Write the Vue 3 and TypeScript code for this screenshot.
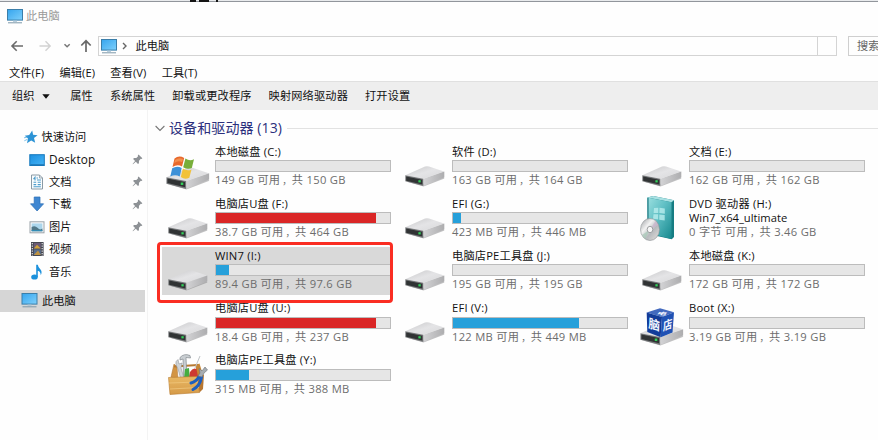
<script setup lang="ts">
interface Drive {
  name: string
  label?: string
  free: string
  total: string
  used?: number
  full?: boolean
  icon: string
  selected?: boolean
}

interface Place {
  name: string
  icon: string
  pinned?: boolean
}

const menus: string[] = ['文件(F)', '编辑(E)', '查看(V)', '工具(T)']
const commands: string[] = ['属性', '系统属性', '卸载或更改程序', '映射网络驱动器', '打开设置']

const places: Place[] = [
  { name: 'Desktop', icon: 'desktop', pinned: true },
  { name: '文档', icon: 'document', pinned: true },
  { name: '下载', icon: 'download', pinned: true },
  { name: '图片', icon: 'picture', pinned: true },
  { name: '视频', icon: 'video' },
  { name: '音乐', icon: 'music' },
]

const drives: Drive[] = [
  { name: '本地磁盘 (C:)', free: '149 GB', total: '150 GB', used: 0, icon: 'system' },
  { name: '软件 (D:)', free: '163 GB', total: '164 GB', used: 0, icon: 'drive' },
  { name: '文档 (E:)', free: '162 GB', total: '162 GB', used: 0, icon: 'drive' },
  { name: '电脑店U盘 (F:)', free: '38.7 GB', total: '464 GB', used: 92, full: true, icon: 'drive' },
  { name: 'EFI (G:)', free: '423 MB', total: '446 MB', used: 5, icon: 'drive' },
  { name: 'DVD 驱动器 (H:)', label: 'Win7_x64_ultimate', free: '0 字节', total: '3.46 GB', icon: 'dvd' },
  { name: 'WIN7 (I:)', free: '89.4 GB', total: '97.6 GB', used: 8, icon: 'drive', selected: true },
  { name: '电脑店PE工具盘 (J:)', free: '195 GB', total: '195 GB', used: 0, icon: 'drive' },
  { name: '本地磁盘 (K:)', free: '172 GB', total: '172 GB', used: 0, icon: 'drive' },
  { name: '电脑店U盘 (U:)', free: '18.4 GB', total: '237 GB', used: 92, full: true, icon: 'drive' },
  { name: 'EFI (V:)', free: '122 MB', total: '449 MB', used: 72.5, icon: 'drive' },
  { name: 'Boot (X:)', free: '3.19 GB', total: '3.19 GB', used: 0, icon: 'boot' },
  { name: '电脑店PE工具盘 (Y:)', free: '315 MB', total: '388 MB', used: 19, icon: 'toolbox' },
]
</script>

<template>
  <div class="window">
    <svg class="defs" width="0" height="0">
      <defs>
        <linearGradient id="gScreen" x1="0" y1="0" x2="1" y2="1">
          <stop offset="0" stop-color="#35a5ee" />
          <stop offset="1" stop-color="#7fd0fb" />
        </linearGradient>
        <linearGradient id="gDesk" x1="0" y1="0" x2="1" y2="1">
          <stop offset="0" stop-color="#1c8fe0" />
          <stop offset="1" stop-color="#45b4f5" />
        </linearGradient>
        <linearGradient id="gTop" x1="0" y1="0" x2="1" y2="1">
          <stop offset="0" stop-color="#c6c6c8" />
          <stop offset="0.5" stop-color="#e4e4e6" />
          <stop offset="1" stop-color="#d8d8da" />
        </linearGradient>
        <linearGradient id="gSide" x1="0" y1="0" x2="1" y2="0">
          <stop offset="0" stop-color="#d3d3d5" />
          <stop offset="1" stop-color="#adadaf" />
        </linearGradient>
        <linearGradient id="gCase" x1="0" y1="0" x2="1" y2="1">
          <stop offset="0" stop-color="#9ce0e0" />
          <stop offset="0.45" stop-color="#5fbfc4" />
          <stop offset="1" stop-color="#16888e" />
        </linearGradient>
        <linearGradient id="gDisc" x1="0" y1="0" x2="1" y2="1">
          <stop offset="0" stop-color="#9a9da0" />
          <stop offset="0.35" stop-color="#f2f2f2" />
          <stop offset="0.6" stop-color="#b7babd" />
          <stop offset="1" stop-color="#e7e2df" />
        </linearGradient>
        <linearGradient id="gWood" x1="0" y1="0" x2="0" y2="1">
          <stop offset="0" stop-color="#e9b864" />
          <stop offset="1" stop-color="#d59a48" />
        </linearGradient>
        <symbol id="pc" viewBox="0 0 16 15">
          <rect x="0.5" y="0.5" width="15" height="10.6" fill="url(#gScreen)" stroke="#3b7ea9" />
          <path d="M6 11.5h4v1.3H6z" fill="#a9c4d6" />
          <path d="M1 13.8h14" stroke="#7d98a9" stroke-width="1" />
        </symbol>
        <symbol id="drive" viewBox="0 0 40 21">
          <path d="M1 15.5 18.5 20.6 39.5 12.5 38 11 18 18z" fill="#77777a" opacity=".45" />
          <path d="M.3 9.3 20 .6Q22 0 24 .6L39 5.6 18.3 12.8z" fill="url(#gTop)" />
          <path d="M18.3 12.8 39.3 5.6V11.4L18.3 20z" fill="url(#gSide)" />
          <path d="M.3 9.3 18.3 12.8V20L.3 15.3z" fill="#77797b" />
          <path d="M1.2 10.5 17.3 13.8V18.6L1.2 14.7z" fill="#303334" />
          <rect x="13.4" y="14.2" width="2.3" height="2.2" fill="#32d35a" />
        </symbol>
      </defs>
    </svg>

    <div class="edge"><i class="speck s1"></i><i class="speck s2"></i><i class="speck s3"></i></div>

    <header class="titlebar">
      <svg class="pc" width="16" height="15"><use href="#pc" /></svg>
      <span>此电脑</span>
    </header>

    <div class="nav">
      <svg class="arrows" width="85" height="20" viewBox="0 0 85 20" fill="none">
        <path d="M12 10H23M16.7 5.3 12 10l4.7 4.7" stroke="#6b6b6b" stroke-width="1.6" />
        <path d="M39.5 10H50M45.5 5.3 50.2 10l-4.7 4.7" stroke="#d2d2d2" stroke-width="1.4" />
        <path d="M64.5 8.3 67.1 10.8 69.7 8.3" stroke="#777" stroke-width="1.5" />
      </svg>
      <svg class="up" width="12" height="14" viewBox="0 0 12 14" fill="none">
        <path d="M6 13V2M1.3 6.5 6 1.8l4.7 4.7" stroke="#686868" stroke-width="1.7" />
      </svg>
      <div class="address">
        <svg class="pc" width="16" height="15"><use href="#pc" /></svg>
        <svg class="crumb" width="5" height="8" viewBox="0 0 5 8" fill="none">
          <path d="M1 1l3 3-3 3" stroke="#666" stroke-width="1.4" />
        </svg>
        <span>此电脑</span>
        <div class="refresh"></div>
      </div>
      <div class="search">搜索</div>
    </div>

    <nav class="menus">
      <span v-for="m in menus" :key="m" class="menu">{{ m }}</span>
    </nav>

    <div class="toolbar">
      <span class="organize">组织</span>
      <svg class="caret" width="8" height="5" viewBox="0 0 8 5"><path d="M.3.3h7.4L4 4.7z" fill="#111" /></svg>
      <span v-for="c in commands" :key="c" class="command">{{ c }}</span>
    </div>

    <div class="body">
      <aside class="side">
        <div class="quick">
          <svg width="14" height="14" viewBox="0 0 14 14">
            <path d="M8.2.5 9.1 4.8 13.6 5.2 10 7.9 11.2 12.7 7.2 10.4 3 13.3 4 8.6.7 5.7 5.2 4.9z" fill="#2c93d5" />
            <path d="M.3 10.8 3.5 9.3M0 7.8 3.3 7.2" stroke="#7fc0e8" stroke-width="1" />
          </svg>
          <span>快速访问</span>
        </div>
        <div v-for="p in places" :key="p.name" class="place">
          <svg class="glyph" width="16" height="18" viewBox="0 0 16 18">
            <g v-if="p.icon === 'desktop'">
              <rect x=".8" y="3.7" width="14.5" height="10.8" fill="url(#gDesk)" stroke="#1679bd" />
              <path d="M1.4 13.8H15" stroke="#1b70ad" />
            </g>
            <g v-else-if="p.icon === 'document'">
              <path d="M2.5 2H10.5L13.5 5V16H2.5z" fill="#fafcfd" stroke="#8a9aa5" />
              <path d="M10.5 2V5H13.5" fill="none" stroke="#8a9aa5" stroke-width=".8" />
              <path d="M4.5 6.2 6 4.3V7.5M7.5 5H9M8 7H12M4.5 9.3H7.2M8.7 9.3H11.8M4.5 11.6H7.2M8.7 11.6H11.8M4.5 13.8H11.8" fill="none" stroke="#4c9ccb" stroke-width="1.1" />
            </g>
            <path v-else-if="p.icon === 'download'" d="M5.2 2H11V8.8H14.6L8.1 16 1.5 8.8H5.2z" fill="#3f87d2" stroke="#2a6db5" stroke-width=".7" />
            <g v-else-if="p.icon === 'picture'">
              <rect x="1" y="3.8" width="14" height="11" fill="#fbfbfb" stroke="#99a2a8" />
              <rect x="2.6" y="5.4" width="10.8" height="7.8" fill="#abd5eb" />
              <path d="M2.6 9Q6 7 8.5 9.8T13.4 10.6V13.2H2.6z" fill="#517787" />
              <path d="M2.6 12H13.4V13.2H2.6z" fill="#328bb4" />
            </g>
            <g v-else-if="p.icon === 'video'">
              <rect x="2" y="2" width="12.6" height="14" fill="#454750" />
              <rect x="4.8" y="3" width="7" height="5.5" fill="#6a5a75" />
              <path d="M4.8 8.5 8 4.7 11.8 8.5z" fill="#d0a238" />
              <rect x="4.8" y="9.4" width="7" height="5.6" fill="#576e90" />
              <path d="M4.8 15 9 10.5 11.8 15z" fill="#bf9240" />
              <path d="M3.3 3V16M13.2 3V16" stroke="#dedee3" stroke-width="1.2" stroke-dasharray="1.2 1.3" />
            </g>
            <g v-else>
              <ellipse cx="5.5" cy="14" rx="3.3" ry="2.6" fill="#1c91dc" />
              <path d="M7.2 14V1.8H8.8Q9.200 4.600 11.500 6.400 13.500 8.500 11.800 12.300 11.700 8.500 8.800 7.700V14z" fill="#1c91dc" />
            </g>
          </svg>
          <span :class="{ latin: p.icon === 'desktop' }">{{ p.name }}</span>
          <svg v-if="p.pinned" class="pin" width="11" height="11" viewBox="0 0 11 11">
            <path d="M6.5.6 10.4 4.3 9.5 5 8.8 4.8 7 6.7 6.9 9.2 6 10 3.8 7.7 1 10.2.6 9.9 3.1 7 1.1 4.9 2 4.1 4.3 4 6.1 2.2 5.8 1.4z" fill="#8d9195" />
          </svg>
        </div>
        <div class="this-pc">
          <svg width="17" height="15"><use href="#pc" /></svg>
          <span>此电脑</span>
        </div>
      </aside>

      <main class="content">
        <div class="group">
          <svg width="10" height="7" viewBox="0 0 10 7" fill="none"><path d="M.6 1 5 5.5 9.4 1" stroke="#777" stroke-width="1.1" /></svg>
          <h2>设备和驱动器 (13)</h2>
          <div class="rule"></div>
        </div>
        <div class="grid">
          <div v-for="d in drives" :key="d.name" class="tile" :class="{ selected: d.selected }">
            <svg class="art" width="52" height="48" viewBox="0 0 52 48">
              <use v-if="d.icon === 'drive'" href="#drive" x="6" y="23" width="40" height="21" />
              <g v-else-if="d.icon === 'system'">
                <use href="#drive" x="4" y="24" width="44" height="23" />
                <path d="M12.5 15.5Q17 12 22.2 15L20 23.5Q15.5 21 10.5 24z" fill="#e8692c" />
                <path d="M23.4 15.6Q27.8 18.4 32 16.2L29.8 25Q25.5 27 21.2 24.2z" fill="#78ae3a" />
                <path d="M10.2 25.2Q15 22.3 19.7 24.9L17.7 33.5Q13 31 8.3 33.6z" fill="#3d91d8" />
                <path d="M20.9 25.5Q25.3 28.5 29.5 26.4L27.3 34.7Q22.8 37 18.8 34.1z" fill="#f2c23a" />
                <path d="M13 17Q17 14 21 16L20 19Q16 17 12.3 20z" fill="#f6a05d" opacity=".7" />
              </g>
              <g v-else-if="d.icon === 'dvd'">
                <path d="M11.3 2.6 17.3 1 38 5.3V42L35.7 44.3 12 39z" fill="#167c82" />
                <path d="M11.3 2.6 17.3 1 38 5.3 35.5 7.3z" fill="#a9e1e3" />
                <path d="M11.3 2.6 35.5 7.3V44L12 38z" fill="url(#gCase)" />
                <path d="M12 3V37" stroke="#277d86" stroke-width="1.2" />
                <path d="M18 13 22.3 12.7V18L17.6 18zM23.5 12.8 28.8 13.6V18.7L23.3 18zM17.5 19.2 22.2 19.3V24.5L17 23.8zM23.3 19.4 28.7 20V25.5L23.2 24.7z" fill="#b9edee" opacity=".8" />
                <ellipse cx="14" cy="34.5" rx="9.5" ry="11" fill="url(#gDisc)" stroke="#8c9093" stroke-width=".6" />
                <path d="M14 34.5 19.5 26 22.5 30z" fill="#c9b3cc" opacity=".7" />
                <path d="M14 34.5 9 44 6 40z" fill="#a6c9b8" opacity=".7" />
                <ellipse cx="14" cy="34.5" rx="2.8" ry="3.2" fill="#f7f7f7" stroke="#8a8d8f" stroke-width=".8" />
              </g>
              <g v-else-if="d.icon === 'boot'">
                <use href="#drive" x="4" y="24" width="44" height="23" />
                <path d="M10.7 13.6 24 9.2 38 13.2 26 18z" fill="#4269be" />
                <path d="M10.7 13.6 26 18 24.7 38.2 11.3 33z" fill="#123c99" />
                <path d="M26 18 38 13.2 36.5 33.5 24.7 38.2z" fill="#1f51b4" />
                <text class="cube" transform="matrix(.92 .27 -.04 1 12.2 28.5)" font-size="12.5">脑</text>
                <text class="cube" transform="matrix(.78 -.3 -.04 1 26.7 32)" font-size="12">店</text>
                <text class="cube" transform="matrix(.9 .08 -.3 .35 20 15.5)" font-size="11">电</text>
              </g>
              <g v-else>
                <path d="M9 26 12 13 15 16 16 28z" fill="#d39544" stroke="#ad7330" stroke-width=".5" />
                <path d="M12 15.5 36 14" stroke="#b77932" stroke-width="2" />
                <path d="M34 14 37.5 12.5 41 24 40 30H34z" fill="#c68636" />
                <path d="M18 6.5Q22 2 28 4.5L28.5 7 24 6.5 25 26H21.5L21 8 18 9z" fill="#c9ced2" stroke="#777e83" stroke-width=".6" />
                <path d="M14 14Q13 10 16 8.5L17 13 20 12 19 17 22 27H18.5L16 18z" fill="#cfd3d6" stroke="#858b8f" stroke-width=".5" />
                <path d="M23 18 27 17 28 28H22z" fill="#44ad40" />
                <path d="M28 21Q31 16 34.5 18L36 26 27 27z" fill="#ce3931" />
                <path d="M33 17 38 5" stroke="#bfc3c6" stroke-width="1" />
                <path d="M6.5 26.5 35 25.5 37.5 41.5 8 43.5z" fill="url(#gWood)" stroke="#b97b2d" stroke-width=".6" />
                <path d="M35 25.5 42 23.5 41 38 37.5 41.5z" fill="#b87730" />
                <path d="M7 32 36 31M8 38 37 36.5" stroke="#f0c77c" stroke-width=".8" />
                <path d="M37.5 25Q34 31 29 32M39.5 26Q38 35 31 38.5" fill="none" stroke="#1d5fbf" stroke-width="3" stroke-linecap="round" />
                <path d="M36 25 38 22 37 17.5 40 20 43 16 45.5 19 42 22 40 26z" fill="#a7adb2" stroke="#6b7277" stroke-width=".6" />
              </g>
            </svg>
            <div class="details">
              <div class="name">{{ d.name }}</div>
              <div v-if="d.used !== undefined" class="bar">
                <div class="fill" :class="{ full: d.full }" :style="{ width: d.used + '%' }"></div>
              </div>
              <div v-else class="volume">{{ d.label }}</div>
              <div class="info">{{ d.free }} 可用<span class="comma">，</span>共 {{ d.total }}</div>
            </div>
            <div v-if="d.selected" class="callout"></div>
          </div>
        </div>
      </main>
    </div>
  </div>
</template>

<style>
body {
  margin: 0;
  overflow: hidden;
}
</style>

<style scoped>
.window {
  width: 878px;
  height: 440px;
  overflow: hidden;
  display: flex;
  flex-direction: column;
  background: #fefefe;
  color: #111;
  font-family: "Open Sans", "Noto Sans CJK SC", sans-serif;
  font-size: 11.2px;
  line-height: 16px;
  white-space: nowrap;
}
svg { display: block; flex: none; }
.defs { position: absolute; }
.edge {
  position: relative;
  box-sizing: border-box;
  height: 2px;
  flex: none;
  background: #e9ebed;
  border-bottom: 1px solid #92969c;
}
.speck { position: absolute; top: 0; height: 2px; background: #151515; }
.s1 { left: 190px; width: 6px; }
.s2 { left: 199px; width: 10px; }
.s3 { left: 216px; width: 2px; }
.titlebar {
  height: 29px;
  flex: none;
  display: flex;
  align-items: center;
  box-sizing: border-box;
  padding: 0 0 1px 7px;
  gap: 3px;
  color: #999;
}
.nav {
  height: 30px;
  flex: none;
  display: flex;
  align-items: center;
}
.arrows { margin-right: -5px; }
.address {
  box-sizing: border-box;
  width: 739px;
  flex: none;
  height: 20px;
  margin-left: 6px;
  border: 1px solid #d4d4d4;
  display: flex;
  align-items: center;
  padding-left: 2px;
}
.crumb { margin: 0 8.5px 0 5px; }
.address span { flex: 1; }
.refresh { width: 18px; height: 18px; border-left: 1px solid #d4d4d4; }
.search {
  box-sizing: border-box;
  height: 20px;
  width: 60px;
  flex: none;
  margin-left: 11px;
  padding-left: 8px;
  line-height: 18px;
  border: 1px solid #cfcfcf;
  color: #666;
}
.menus {
  height: 20px;
  flex: none;
  display: flex;
  padding-left: 9px;
  gap: 15.2px;
  line-height: 24px;
  letter-spacing: .1px;
}
.toolbar {
  height: 29px;
  flex: none;
  box-sizing: border-box;
  border-top: 1px solid #e0e0e0;
  background: #eee;
  display: flex;
  align-items: center;
  padding-left: 12px;
  letter-spacing: .15px;
}
.caret { margin: 1px 3px 0 7.5px; }
.command { margin-left: 17px; }
.body { flex: 1; display: flex; min-height: 0; }
.side {
  width: 148px;
  flex: none;
  box-sizing: border-box;
  border-right: 1px solid #f3f3f3;
  padding-top: 16px;
}
.quick {
  height: 22.4px;
  display: flex;
  align-items: center;
  padding-left: 24px;
  gap: 3.5px;
}
.place {
  height: 22.4px;
  display: flex;
  align-items: center;
  padding: 0 4px 0 29px;
}
.glyph { margin-right: 4px; }
.latin { font-size: 11.8px; letter-spacing: .1px; padding-bottom: 2px; }
.pin { margin-left: auto; }
.this-pc {
  width: 145px;
  height: 22.5px;
  margin-top: 7px;
  box-sizing: border-box;
  padding-left: 21px;
  display: flex;
  align-items: center;
  gap: 4px;
  background: #d6d6d6;
}
.content { flex: 1; min-width: 0; padding-top: 8px; }
.group {
  display: flex;
  align-items: center;
  height: 20px;
  padding-left: 7px;
}
.group h2 {
  margin: 0 5px 1px 4px;
  font-size: 14px;
  font-weight: 400;
  line-height: 20px;
  letter-spacing: .1px;
  color: #2b2f7c;
}
.rule { flex: 1; height: 1px; background: #e2e2e2; }
.grid {
  display: grid;
  grid-template-columns: repeat(3, 237px);
  grid-auto-rows: 52.2px;
  margin: 4.5px 0 0 14px;
}
.tile { display: flex; height: 48.5px; width: 229px; position: relative; }
.tile.selected { background: #d9d9d9; }
.details { flex: 1; padding-left: .5px; }
.name { height: 17.5px; line-height: 17.5px; padding-left: .5px; letter-spacing: .2px; }
.bar {
  box-sizing: border-box;
  height: 12px;
  border: 1px solid #bcbcbc;
  background: #e6e6e6;
}
.fill { height: 100%; background: #26a0da; }
.fill.full { background: #da2626; }
.volume { height: 12px; line-height: 12px; padding-left: .5px; }
.info { padding: 0 0 0 .5px; line-height: 15.5px; color: #6d6d6d; letter-spacing: .29px; }
.comma { padding-left: 1.9px; font-size: 9.3px; line-height: 1; }
.cube { fill: #f3f6ff; font-family: "Noto Sans CJK SC", sans-serif; font-weight: 700; }
.callout {
  position: absolute;
  inset: -5px -2px -8px -5px;
  border: 3px solid #fa2d22;
  border-radius: 4px;
  z-index: 2;
}
</style>
